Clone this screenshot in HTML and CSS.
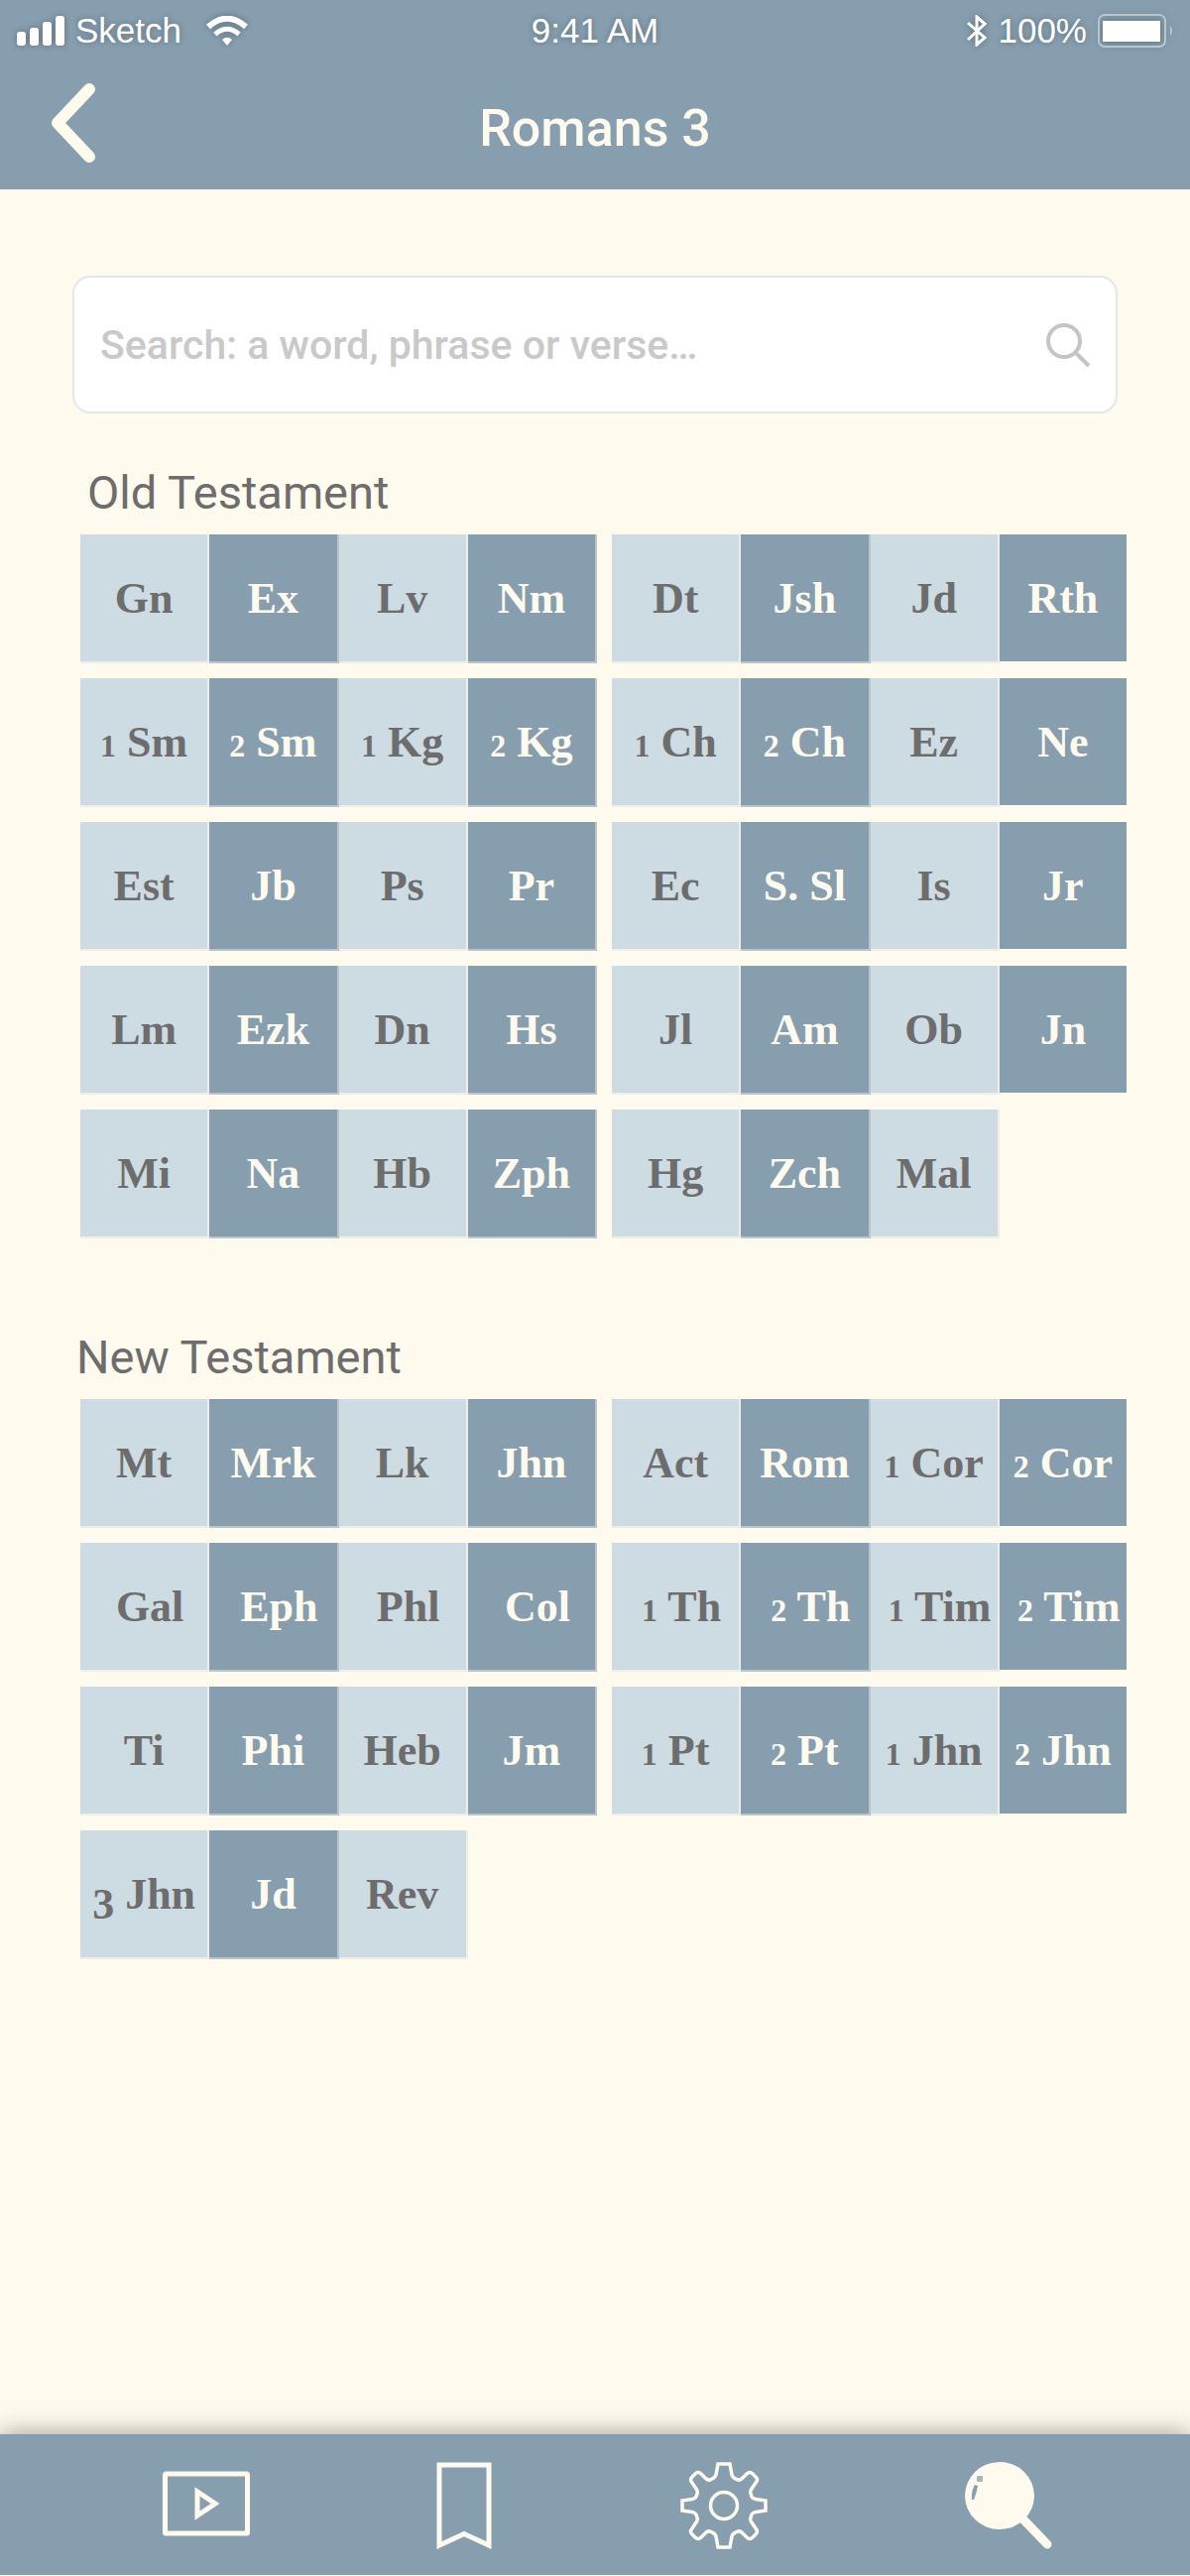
FILE: index.html
```html
<!DOCTYPE html>
<html lang="en">
<head>
<meta charset="utf-8">
<meta name="viewport" content="width=device-width, initial-scale=1">
<title>Romans 3</title>
<link rel="stylesheet" href="styles.css">
</head>
<body>
<div class="app">
  <header class="header">
    <div class="status">
      <div class="status-left">
        <svg class="signal" width="48" height="30" viewBox="0 0 48 30" aria-hidden="true"><rect x="0" y="16" width="9" height="14" rx="3"/><rect x="13" y="12" width="9" height="18" rx="3"/><rect x="26" y="6" width="9" height="24" rx="3"/><rect x="39" y="0" width="9" height="30" rx="3"/></svg>
        <span class="carrier">Sketch</span>
        <svg class="wifi" width="42" height="30" viewBox="0 0 42 30" aria-hidden="true"><path d="M21 30l-5-6q5-4.500 10 0z"/><path d="M9 18.500Q21 8 33 18.500" fill="none" stroke="#fff" stroke-width="5"/><path d="M2 11Q21-5.500 40 11" fill="none" stroke="#fff" stroke-width="6"/></svg>
      </div>
      <span>9:41 AM</span>
      <div class="status-right">
        <svg class="bluetooth" width="20" height="32" viewBox="0 0 20 32" aria-hidden="true"><path d="M1 8L18 23L10 30V2L18 9L1 25" fill="none" stroke="#fff" stroke-width="3"/></svg>
        <span>100%</span>
        <svg class="battery" width="76" height="34" viewBox="0 0 76 34" aria-hidden="true"><rect x="1" y="1" width="67" height="32" rx="6" fill="none" stroke="#fff" stroke-opacity=".45" stroke-width="2"/><rect x="5" y="7" width="58" height="21"/><path d="M73 12q4 5 0 10z" fill-opacity=".45"/></svg>
      </div>
    </div>
    <div class="titlebar">
      <button class="back" type="button" aria-label="Back"><svg width="48" height="96" viewBox="0 0 48 96" aria-hidden="true"><path d="M40 8L8 42L40 76" fill="none" stroke="#fefaee" stroke-width="12" stroke-linecap="round" stroke-linejoin="round"/></svg></button>
      <h1 class="title">Romans 3</h1>
    </div>
  </header>

  <main class="content">
    <form class="search" role="search">
      <input class="search-input" type="text" aria-label="Search" placeholder="Search: a word, phrase or verse…">
      <button class="search-button" type="submit" aria-label="Search"><svg width="46" height="46" viewBox="0 0 46 46" aria-hidden="true"><circle cx="18" cy="19" r="16"/><path d="M29 30L43 44"/></svg></button>
    </form>

    <section class="testament">
      <h2 class="heading heading-old">Old Testament</h2>
      <nav class="books" aria-label="Old Testament">
        <a href="#gn">Gn</a><a href="#ex">Ex</a><a href="#lv">Lv</a><a href="#nm">Nm</a>
        <a href="#dt">Dt</a><a href="#jsh">Jsh</a><a href="#jdg">Jd</a><a href="#rth">Rth</a>
        <a href="#1sm"><span class="num">1</span> Sm</a><a href="#2sm"><span class="num">2</span> Sm</a><a href="#1kg"><span class="num">1</span> Kg</a><a href="#2kg"><span class="num">2</span> Kg</a>
        <a href="#1ch"><span class="num">1</span> Ch</a><a href="#2ch"><span class="num">2</span> Ch</a><a href="#ez">Ez</a><a href="#ne">Ne</a>
        <a href="#est">Est</a><a href="#jb">Jb</a><a href="#ps">Ps</a><a href="#pr">Pr</a>
        <a href="#ec">Ec</a><a href="#ssl">S. Sl</a><a href="#is">Is</a><a href="#jr">Jr</a>
        <a href="#lm">Lm</a><a href="#ezk">Ezk</a><a href="#dn">Dn</a><a href="#hs">Hs</a>
        <a href="#jl">Jl</a><a href="#am">Am</a><a href="#ob">Ob</a><a href="#jn">Jn</a>
        <a href="#mi">Mi</a><a href="#na">Na</a><a href="#hb">Hb</a><a href="#zph">Zph</a>
        <a href="#hg">Hg</a><a href="#zch">Zch</a><a href="#mal">Mal</a>
      </nav>
    </section>

    <section class="testament">
      <h2 class="heading">New Testament</h2>
      <nav class="books" aria-label="New Testament">
        <a href="#mt">Mt</a><a href="#mrk">Mrk</a><a href="#lk">Lk</a><a href="#jhn">Jhn</a>
        <a href="#act">Act</a><a href="#rom">Rom</a><a href="#1cor"><span class="num">1</span> Cor</a><a href="#2cor"><span class="num">2</span> Cor</a>
        <a class="letter" href="#gal">Gal</a><a class="letter" href="#eph">Eph</a><a class="letter" href="#phl">Phl</a><a class="letter" href="#col">Col</a>
        <a class="letter" href="#1th"><span class="num">1</span> Th</a><a class="letter" href="#2th"><span class="num">2</span> Th</a><a class="letter" href="#1tim"><span class="num">1</span> Tim</a><a class="letter" href="#2tim"><span class="num">2</span> Tim</a>
        <a href="#ti">Ti</a><a href="#phi">Phi</a><a href="#heb">Heb</a><a href="#jm">Jm</a>
        <a href="#1pt"><span class="num">1</span> Pt</a><a href="#2pt"><span class="num">2</span> Pt</a><a href="#1jhn"><span class="num">1</span> Jhn</a><a href="#2jhn"><span class="num">2</span> Jhn</a>
        <a href="#3jhn"><span class="num-low">3</span> Jhn</a><a href="#jd">Jd</a><a href="#rev">Rev</a>
      </nav>
    </section>
  </main>

  <nav class="tabbar" aria-label="Main">
    <a href="#videos" aria-label="Videos"><svg width="88" height="88" viewBox="0 0 88 88" aria-hidden="true"><rect x="2.500" y="12" width="83" height="60" rx="1" stroke-width="5"/><path d="M35 30v24l18-12z" stroke-width="5"/></svg></a>
    <a href="#bookmarks" aria-label="Bookmarks"><svg width="56" height="88" viewBox="0 0 56 88" aria-hidden="true"><path d="M3 3h50v81L28 72.500 3 84z" stroke-width="5"/></svg></a>
    <a href="#settings" aria-label="Settings"><svg width="88" height="88" viewBox="0 0 88 88" aria-hidden="true"><circle cx="44" cy="44" r="13.500" stroke-width="3.500"/><path stroke-width="3.500" d="M38 2H50L52 13Q53 16 56 17L58 18Q60 18.500 62 17L67 12Q70 9 73 12L76 15Q79 18 76 21L72 27Q70 30 71 32L72 35Q73 37 76 37.500L86 39V49L76 50.500Q73 51 72 53L71 56Q70 58 72 61L76 67Q79 70 76 73L73 76Q70 79 67 76L62 71Q60 69.500 58 70L56 71Q53 72 52 75L50 86H38L36 75Q35 72 32 71L30 70Q28 69.500 26 71L21 76Q18 79 15 76L12 73Q9 70 12 67L16 61Q18 58 17 56L16 53Q15 51 12 50.500L2 49V39L12 37.500Q15 37 16 35L17 32Q18 30 16 27L12 21Q9 18 12 15L15 12Q18 9 21 12L26 17Q28 18.500 30 18L32 17Q35 16 36 13Z"/></svg></a>
    <a href="#search" aria-label="Search"><svg width="88" height="88" viewBox="0 0 88 88" aria-hidden="true"><ellipse cx="35" cy="34" rx="35" ry="34" fill="#fefaee" stroke="none"/><path d="M57 56L83 83" stroke-width="9" stroke-linecap="round"/><path d="M10 23L13 24Q12 31 9 38H7Q6 30 10 23z" fill="#869eae" stroke="none"/><rect x="12" y="14" width="6" height="6" rx="1" fill="#a5b6bf" stroke="none"/></svg></a>
  </nav>
</div>
</body>
</html>
```
FILE: styles.css
```css
* { box-sizing: border-box; }

body {
  margin: 0;
  background: #fefaee;
  color: #6d6d6d;
  font-family: Roboto, "Liberation Sans", sans-serif;
}

svg { display: block; }

button {
  padding: 0;
  border: 0;
  background: none;
}

.app {
  display: flex;
  flex-direction: column;
  min-height: 100vh;
}

.header {
  padding-bottom: 4px;
  background: #869eae;
  color: #fefaee;
}

.status {
  display: grid;
  grid-template-columns: 1fr auto 1fr;
  align-items: center;
  height: 62px;
  padding: 0 17px;
  color: #fff;
  font: 35px/40px "Liberation Sans", Arial, sans-serif;
  text-shadow: 0 0 6px rgba(0, 0, 0, .3);
}

.status svg {
  fill: #fff;
  filter: drop-shadow(0 0 3px rgba(0, 0, 0, .3));
}

.status-left,
.status-right {
  display: flex;
  align-items: center;
  gap: 11px;
}

.status-left .wifi { margin-left: 14px; }

.status-right { justify-content: flex-end; }

.titlebar {
  display: grid;
  grid-template-columns: 1fr auto 1fr;
  align-items: center;
  height: 125px;
  padding: 10px 50px 0;
}

.back { width: 48px; }

.title {
  margin: 0;
  font-size: 52px;
  font-weight: 500;
  line-height: 64px;
}

.content { padding: 87px 62px 60px 73px; }

.search {
  display: flex;
  align-items: center;
  height: 139px;
  margin-right: 11px;
  padding: 0 24px 0 26px;
  border: 2px solid #e6e6e6;
  border-radius: 18px;
  background: #fff;
}

.search-input {
  flex: 1;
  min-width: 0;
  padding: 0;
  border: 0;
  outline: 0;
  background: none;
  color: #6d6d6d;
  font: 500 41px/48px Roboto, sans-serif;
}

.search-input::placeholder { color: #c9c9c9; opacity: 1; }

.search-button svg {
  fill: none;
  stroke: #c4c4c4;
  stroke-width: 4;
}

.testament { margin-top: 52px; }

.testament + .testament { margin-top: 92px; }

.heading {
  margin: 0 0 14px;
  padding-left: 4px;
  font-size: 47px;
  font-weight: 400;
  line-height: 56px;
}

.heading-old { padding-left: 15px; }

.books {
  display: grid;
  grid-template-columns: repeat(4, 1fr) 15px repeat(4, 1fr);
  row-gap: 15px;
  padding-left: 8px;
}

.books a {
  height: 130px;
  border: solid #eceeea;
  border-width: 0 2px 2px 0;
  background: #cddbe3;
  color: #6d6d6d;
  font: bold 44px/130px "Liberation Serif", "Times New Roman", serif;
  text-align: center;
  text-decoration: none;
  white-space: nowrap;
}

.books a:nth-child(even) {
  border-color: #b9c5ca;
  background: #869eae;
  color: #fefaee;
}

.books a:nth-child(8n + 5) { grid-column: 6; }

.books a:nth-child(8n) { border-color: #fefaee; }

.books .letter { padding-left: 12px; }

.num {
  font-size: 32px;
  line-height: 1;
}

.num-low {
  line-height: 1;
  vertical-align: -10px;
}

.tabbar {
  display: grid;
  grid-template-columns: 260fr 260fr 264fr 310fr;
  align-items: center;
  justify-items: center;
  height: 143px;
  margin-top: auto;
  padding: 2px 28px 0 78px;
  border-bottom: 1px solid #fff;
  background: #869eae;
  box-shadow: 0 0 24px rgba(0, 0, 0, .4);
}

.tabbar svg {
  fill: none;
  stroke: #fefaee;
}
```
